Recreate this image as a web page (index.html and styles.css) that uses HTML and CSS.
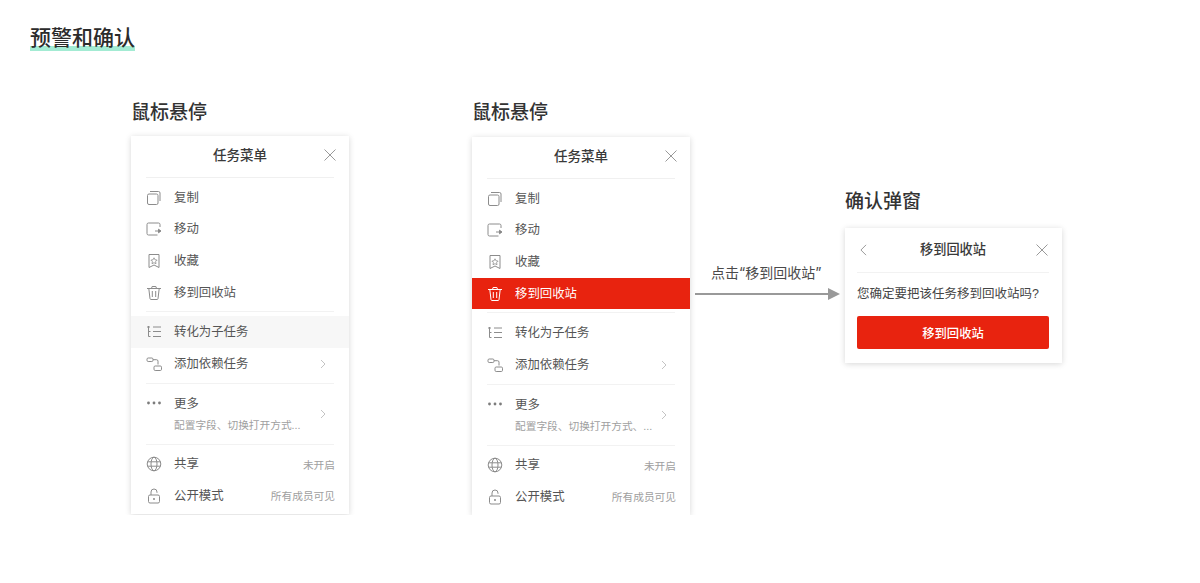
FILE: index.html
```html
<!DOCTYPE html>
<html lang="zh-CN">
<head>
  <meta charset="UTF-8">
  <meta name="viewport" content="width=device-width, initial-scale=1.0">
  <title>预警和确认</title>
  <link rel="stylesheet" href="styles.css">
</head>
<body>

  <svg class="sprite" xmlns="http://www.w3.org/2000/svg">
    <symbol id="i-copy" viewBox="0 0 16 16"><rect x="1.5" y="4" width="10.5" height="10.5" rx="1.5"/><path d="M4 1.5h8.5A1.5 1.5 0 0 1 14 3v8"/></symbol>
    <symbol id="i-move" viewBox="0 0 16 16"><path d="M14 6V3.5A1.5 1.5 0 0 0 12.5 2h-10A1.5 1.5 0 0 0 1 3.500v9A1.500 1.500 0 0 0 2.500 14h9"/><path d="M9 10h4"/><path d="M12.500 8.200l2.500 1.800-2.500 1.800z" fill="currentColor"/></symbol>
    <symbol id="i-star" viewBox="0 0 16 16"><path d="M3 1.500h10v13l-5-2.500-5 2.500z"/><path d="M8 4.800l1 2 2.100.3-1.500 1.500.4 2.100L8 9.700l-2 1 .4-2.100-1.500-1.500 2.100-.3z" stroke-width=".8"/></symbol>
    <symbol id="i-trash" viewBox="0 0 16 16"><path d="M1 3.500h14M5.500 3.500l.6-2h3.800l.6 2M2.800 3.500l1.200 10.200c.1.500.5.800 1 .8h6c.5 0 .9-.3 1-.8l1.200-10.200M6.300 6v6M9.700 6v6"/></symbol>
    <symbol id="i-sub" viewBox="0 0 16 16"><path d="M2.500 2v10.500h2M2.500 7.500h2M1 3h3M7 3h8M7 7.500h8M7 12.500h8"/></symbol>
    <symbol id="i-dep" viewBox="0 0 16 16"><rect x="1" y="2" width="6" height="3.500" rx="1.200"/><path d="M7 3.700h3.500a1.500 1.500 0 0 1 1.500 1.500v3.300"/><rect x="8" y="10" width="7.500" height="4.500" rx="1.200"/></symbol>
    <symbol id="i-more" viewBox="0 0 16 16"><circle cx="2.500" cy="8" r="1.400" fill="currentColor" stroke="none"/><circle cx="8" cy="8" r="1.400" fill="currentColor" stroke="none"/><circle cx="13.500" cy="8" r="1.400" fill="currentColor" stroke="none"/></symbol>
    <symbol id="i-globe" viewBox="0 0 16 16"><circle cx="8" cy="8" r="6.800"/><ellipse cx="8" cy="8" rx="3" ry="6.800"/><path d="M1.500 5.800h13M1.500 10.200h13"/></symbol>
    <symbol id="i-lock" viewBox="0 0 16 16"><rect x="2.500" y="7" width="11" height="8" rx="1.500"/><path d="M5 7V4a3 3 0 0 1 6 0v.8"/><circle cx="8" cy="11" r=".9" fill="currentColor" stroke="none"/></symbol>
    <symbol id="i-next" viewBox="0 0 6 10"><path d="M1 1l4 4-4 4"/></symbol>
    <symbol id="i-back" viewBox="0 0 8 14"><path d="M7 1L1 7l6 6"/></symbol>
    <symbol id="i-close" viewBox="0 0 12 12"><path d="M.5.500l11 11M11.500.500l-11 11"/></symbol>
  </svg>

  <h1 class="page-title"><span>预警和确认</span></h1>

  <div class="board">

    <section class="col col-first">
      <h2 class="col-title">鼠标悬停</h2>
      <div class="menu">
        <div class="menu-head">任务菜单<svg class="close"><use href="#i-close"/></svg></div>
        <div class="group">
          <div class="row"><svg class="ico"><use href="#i-copy"/></svg><span class="label">复制</span></div>
          <div class="row"><svg class="ico"><use href="#i-move"/></svg><span class="label">移动</span></div>
          <div class="row"><svg class="ico"><use href="#i-star"/></svg><span class="label">收藏</span></div>
          <div class="row"><svg class="ico"><use href="#i-trash"/></svg><span class="label">移到回收站</span></div>
        </div>
        <div class="group">
          <div class="row row-hover"><svg class="ico"><use href="#i-sub"/></svg><span class="label">转化为子任务</span></div>
          <div class="row"><svg class="ico"><use href="#i-dep"/></svg><span class="label">添加依赖任务</span><svg class="next"><use href="#i-next"/></svg></div>
        </div>
        <div class="group">
          <div class="row row-tall">
            <svg class="ico"><use href="#i-more"/></svg>
            <span class="label-wrap"><span class="label">更多</span><span class="sub">配置字段、切换打开方式...</span></span>
            <svg class="next"><use href="#i-next"/></svg>
          </div>
        </div>
        <div class="group group-last">
          <div class="row"><svg class="ico"><use href="#i-globe"/></svg><span class="label">共享</span><span class="meta">未开启</span></div>
          <div class="row"><svg class="ico"><use href="#i-lock"/></svg><span class="label">公开模式</span><span class="meta">所有成员可见</span></div>
        </div>
      </div>
    </section>

    <section class="col col-second">
      <h2 class="col-title">鼠标悬停</h2>
      <div class="menu">
        <div class="menu-head">任务菜单<svg class="close"><use href="#i-close"/></svg></div>
        <div class="group">
          <div class="row"><svg class="ico"><use href="#i-copy"/></svg><span class="label">复制</span></div>
          <div class="row"><svg class="ico"><use href="#i-move"/></svg><span class="label">移动</span></div>
          <div class="row"><svg class="ico"><use href="#i-star"/></svg><span class="label">收藏</span></div>
          <div class="row row-danger"><svg class="ico"><use href="#i-trash"/></svg><span class="label">移到回收站</span></div>
        </div>
        <div class="group">
          <div class="row"><svg class="ico"><use href="#i-sub"/></svg><span class="label">转化为子任务</span></div>
          <div class="row"><svg class="ico"><use href="#i-dep"/></svg><span class="label">添加依赖任务</span><svg class="next"><use href="#i-next"/></svg></div>
        </div>
        <div class="group">
          <div class="row row-tall">
            <svg class="ico"><use href="#i-more"/></svg>
            <span class="label-wrap"><span class="label">更多</span><span class="sub">配置字段、切换打开方式、...</span></span>
            <svg class="next"><use href="#i-next"/></svg>
          </div>
        </div>
        <div class="group group-last">
          <div class="row"><svg class="ico"><use href="#i-globe"/></svg><span class="label">共享</span><span class="meta">未开启</span></div>
          <div class="row"><svg class="ico"><use href="#i-lock"/></svg><span class="label">公开模式</span><span class="meta">所有成员可见</span></div>
        </div>
      </div>
    </section>

    <div class="link">
      <div class="link-text">点击“移到回收站”</div>
      <div class="arrow"><span class="arrow-line"></span><span class="arrow-head"></span></div>
    </div>

    <section class="col col-third">
      <h2 class="col-title">确认弹窗</h2>
      <div class="dialog">
        <div class="dialog-head">
          <svg class="back"><use href="#i-back"/></svg>
          <span>移到回收站</span>
          <svg class="close"><use href="#i-close"/></svg>
        </div>
        <p class="dialog-text">您确定要把该任务移到回收站吗?</p>
        <button class="dialog-btn" type="button">移到回收站</button>
      </div>
    </section>

  </div>

</body>
</html>
```

FILE: styles.css
```css
body {
  margin: 0;
  background-color: #fff;
  color: #333;
  font-family: "Liberation Sans", "Noto Sans CJK SC", sans-serif;
}
.sprite {
  display: none;
}
.page-title {
  margin: 24px 0 0 30px;
  font-size: 21px;
  font-weight: 500;
  line-height: 27px;
  color: #2b2b2b;
}
.page-title span {
  display: inline-block;
  background: linear-gradient(#a3ebd3, #a3ebd3) left bottom / 100% 5px no-repeat;
}
.board {
  display: flex;
  align-items: flex-start;
  margin-top: 50px;
  padding-left: 131px;
}
.col-second {
  margin-left: 123px;
}
.col-second .col-title {
  margin-bottom: 12px;
}
.col-third {
  margin-top: 89px;
}
.col-third .col-title {
  margin-bottom: 14px;
}
.col-title {
  margin: 0 0 11px 0;
  font-size: 19px;
  font-weight: 500;
  line-height: 24px;
  color: #333;
}
.menu {
  width: 218px;
  height: 378px;
  background-color: #fff;
  box-shadow: 0 1px 6px rgba(0, 0, 0, 0.16);
}
.menu-head {
  position: relative;
  height: 41px;
  margin: 0 15px;
  border-bottom: 1px solid #f0f0f0;
  font-size: 13.500px;
  font-weight: 500;
  line-height: 39px;
  text-align: center;
  color: #3a3a3a;
}
.close {
  position: absolute;
  top: 13px;
  right: -2px;
  width: 12px;
  height: 12px;
  fill: none;
  stroke: #999;
  stroke-width: 1;
}
.group {
  padding: 4px 0;
  position: relative;
}
.group::after {
  content: "";
  position: absolute;
  left: 15px;
  right: 15px;
  bottom: 0;
  height: 1px;
  background-color: #f2f2f2;
}
.group-last {
  padding-top: 4px;
}
.group-last::after {
  display: none;
}
.row {
  display: flex;
  align-items: center;
  height: 31.600px;
  padding: 0 14px 0 15px;
  font-size: 12.400px;
  color: #555;
}
.row-hover {
  background-color: #f7f7f7;
}
.row-danger {
  background-color: #e8230f;
  color: #fff;
}
.row-tall {
  height: 53px;
}
.ico {
  flex: none;
  width: 16px;
  height: 16px;
  margin-right: 12px;
  fill: none;
  stroke: #8c8c8c;
  stroke-width: 1;
  color: #7c7c7c;
}
.row-tall .ico {
  align-self: flex-start;
  margin-top: 7px;
}
.row-danger .ico {
  stroke: #fff;
  color: #fff;
}
.label-wrap {
  display: flex;
  flex-direction: column;
  gap: 4px;
}
.label {
  line-height: 18px;
}
.sub {
  font-size: 10.700px;
  line-height: 16px;
  color: #a0a0a0;
  white-space: nowrap;
}
.meta {
  margin-left: auto;
  font-size: 10.700px;
  color: #a0a0a0;
}
.next {
  width: 6px;
  height: 10px;
  margin-left: auto;
  margin-right: 9px;
  fill: none;
  stroke: #c4c4c4;
  stroke-width: 1;
}
.link {
  flex: none;
  width: 150px;
  margin-top: 160px;
  margin-left: 5px;
}
.link-text {
  padding-left: 16px;
  font-family: Inter, "Noto Sans CJK SC", sans-serif;
  font-size: 14px;
  line-height: 24px;
  color: #4a4a4a;
  white-space: nowrap;
}
.arrow {
  display: flex;
  align-items: center;
  margin-top: 3px;
}
.arrow-line {
  flex: none;
  width: 133px;
  height: 1.500px;
  background-color: #999;
}
.arrow-head {
  flex: none;
  width: 0;
  height: 0;
  border-left: 12px solid #999;
  border-top: 6px solid transparent;
  border-bottom: 6px solid transparent;
}
.dialog {
  box-sizing: border-box;
  width: 217px;
  height: 135px;
  padding: 0 13px 0 12px;
  background-color: #fff;
  box-shadow: 0 1px 6px rgba(0, 0, 0, 0.16);
}
.dialog-head {
  position: relative;
  height: 44px;
  border-bottom: 1px solid #f2f2f2;
  font-size: 13.200px;
  font-weight: 500;
  line-height: 44px;
  text-align: center;
  color: #3a3a3a;
}
.dialog-head .close {
  top: 16px;
  right: 1px;
}
.back {
  position: absolute;
  left: 3px;
  top: 16px;
  width: 7px;
  height: 12px;
  fill: none;
  stroke: #8a8a8a;
  stroke-width: 1;
}
.dialog-text {
  margin: 0;
  font-size: 12.500px;
  line-height: 43px;
  color: #444;
  white-space: nowrap;
}
.dialog-btn {
  display: block;
  width: 100%;
  height: 33px;
  padding: 0;
  border: none;
  border-radius: 2px;
  background-color: #e8230f;
  color: #fff;
  font-family: inherit;
  font-size: 12.300px;
  font-weight: 500;
}
```
